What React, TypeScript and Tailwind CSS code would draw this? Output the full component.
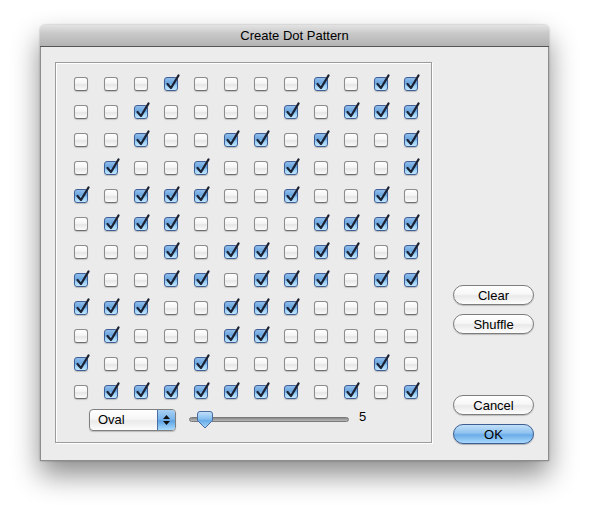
import React from 'react';

const PATTERN = [
  '000100001011',
  '001000010111',
  '001001101001',
  '010010010001',
  '101110010010',
  '011100001111',
  '000101101101',
  '100110111011',
  '111001110000',
  '010001100000',
  '100010000010',
  '011111110101',
];

function CheckBox({ checked }: { checked: boolean }) {
  if (!checked) {
    return (
      <div className="relative w-[14px] h-[14px] rounded-[3px] border border-[#8c8c8c] border-b-[#6e6e6e] bg-[linear-gradient(to_bottom,#ffffff_0%,#f4f4f4_45%,#e6e6e6_55%,#fbfbfb_100%)] shadow-[0_1px_1px_rgba(0,0,0,0.18)]" />
    );
  }
  return (
    <div className="relative w-[14px] h-[14px] rounded-[3px] border border-[#3f5f96] bg-[linear-gradient(to_bottom,#8fbdeb_0%,#6aa5de_45%,#8ec8f3_58%,#c4e8ff_100%)] shadow-[0_1px_1px_rgba(0,0,0,0.2)]">
      <svg className="absolute left-[-2px] top-[-5px]" width="19" height="19" viewBox="0 0 19 19">
        <path d="M4.5 11 L8 15 L15.5 2.5" fill="none" stroke="#1b2233" strokeWidth="2.3" strokeLinecap="round" strokeLinejoin="round" />
      </svg>
    </div>
  );
}

function AquaButton({ label, primary = false, className = '' }: { label: string; primary?: boolean; className?: string }) {
  const base = 'block w-[81px] h-[20px] rounded-full text-[13px] leading-none text-black ';
  return (
    <button
      className={
        base +
        (primary
          ? 'border border-[#3d5e93] bg-[linear-gradient(to_bottom,#c3e0f8_0%,#8ec2f0_45%,#6aabe8_55%,#a9dafd_100%)] shadow-[0_1px_1px_rgba(0,0,0,0.25)] '
          : 'border border-[#7d7d7d] bg-[linear-gradient(to_bottom,#ffffff_0%,#f7f7f7_45%,#e9e9e9_55%,#fdfdfd_100%)] shadow-[0_1px_1px_rgba(0,0,0,0.2)] ') +
        className
      }
    >
      {label}
    </button>
  );
}

export default function App() {
  return (
    <div className="w-[589px] h-[515px] bg-white pt-[25px] pl-[40px] font-['Liberation_Sans',Arial,sans-serif] text-black">
      <div className="w-[509px] rounded-t-[5px] shadow-[0_14px_28px_rgba(0,0,0,0.45),0_0_2px_rgba(0,0,0,0.35)]">
        {/* title bar */}
        <div className="h-[22px] rounded-t-[5px] border-b border-[#555555] bg-[linear-gradient(to_bottom,#e3e3e3_0%,#c9c9c9_40%,#b3b3b3_100%)] flex items-center justify-center text-[13px]">
          Create Dot Pattern
        </div>

        {/* body */}
        <div className="bg-[#ececec] border border-t-0 border-[#8d8d8d] pl-[14px] pt-[15px] pb-[17px] flex items-end">
          {/* group box */}
          <div className="w-[377px] h-[381px] border border-[#9b9b9b] bg-[#ebebeb] shadow-[inset_1px_1px_0_#ffffff,1px_1px_0_#ffffff] pl-[18px] pt-[14px]">
            <div className="grid grid-cols-[repeat(12,14px)] gap-x-[16px] gap-y-[14px]">
              {PATTERN.map((row, r) =>
                row.split('').map((c, i) => <CheckBox key={r + '-' + i} checked={c === '1'} />)
              )}
            </div>

            <div className="flex items-start mt-[10px] ml-[15px]">
              {/* popup */}
              <div className="flex w-[87px] h-[22px] rounded-[4px] border border-[#7f7f7f] bg-[linear-gradient(to_bottom,#ffffff_0%,#f6f6f6_45%,#eaeaea_55%,#fcfcfc_100%)] shadow-[0_1px_1px_rgba(0,0,0,0.2)] overflow-hidden">
                <div className="flex-1 flex items-center pl-[8px] text-[13px]">Oval</div>
                <div className="w-[18px] border-l border-[#4b6ea6] bg-[linear-gradient(to_bottom,#a8d0f4_0%,#7bb6ec_45%,#5ea3e4_55%,#a8dbfd_100%)] flex flex-col items-center justify-center gap-[2px]">
                  <svg width="7" height="4" viewBox="0 0 7 4"><path d="M3.5 0 L7 4 L0 4 Z" fill="#111" /></svg>
                  <svg width="7" height="4" viewBox="0 0 7 4"><path d="M0 0 L7 0 L3.5 4 Z" fill="#111" /></svg>
                </div>
              </div>

              {/* slider */}
              <div className="relative ml-[13px] mt-[8px] w-[160px] h-[5px] rounded-full bg-[linear-gradient(to_bottom,#8a8a8a,#b8b8b8)] border border-[#7a7a7a]">
                <svg className="absolute left-[7px] top-[-7px]" width="16" height="18" viewBox="0 0 16 18">
                  <defs>
                    <linearGradient id="thumb" x1="0" y1="0" x2="0" y2="1">
                      <stop offset="0" stopColor="#c3e1f9" />
                      <stop offset="0.45" stopColor="#86bff0" />
                      <stop offset="0.55" stopColor="#67ace8" />
                      <stop offset="1" stopColor="#a9d9fb" />
                    </linearGradient>
                  </defs>
                  <path d="M3 0.5 H13 Q15.5 0.5 15.5 3 V9.5 L8 17 L0.5 9.5 V3 Q0.5 0.5 3 0.5 Z" fill="url(#thumb)" stroke="#4a6ba0" strokeWidth="1" />
                </svg>
              </div>
              <div className="ml-[10px] mt-[1px] text-[13px] leading-none">5</div>
            </div>
          </div>

          {/* right buttons */}
          <div className="ml-[21px] mb-[-1px] flex flex-col">
            <AquaButton label="Clear" />
            <AquaButton label="Shuffle" className="mt-[9px]" />
            <AquaButton label="Cancel" className="mt-[61px]" />
            <AquaButton label="OK" primary className="mt-[9px]" />
          </div>
        </div>
      </div>
    </div>
  );
}
